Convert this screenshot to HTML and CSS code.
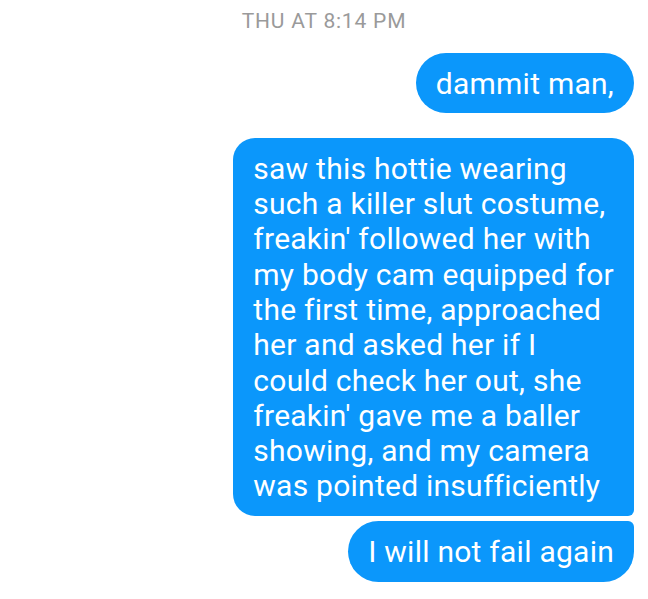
FILE: index.html
```html
<!DOCTYPE html>
<html>
<head>
<meta charset="utf-8">
<link rel="stylesheet" href="styles.css">
</head>
<body>
<div class="thread">
  <div class="timestamp">THU AT 8:14 PM</div>
  <div class="group">
    <div class="bubble single">dammit man,</div>
  </div>
  <div class="group">
    <div class="bubble first">saw this hottie wearing<br>such a killer slut costume,<br>freakin' followed her with<br>my body cam equipped for<br>the first time, approached<br>her and asked her if I<br>could check her out, she<br>freakin' gave me a baller<br>showing, and my camera<br>was pointed insufficiently</div>
    <div class="bubble last">I will not fail again</div>
  </div>
</div>
</body>
</html>
```
FILE: styles.css
```css
html, body {
  margin: 0;
  padding: 0;
  background: #ffffff;
}
.thread {
  width: 648px;
  height: 599px;
  display: flex;
  flex-direction: column;
  font-family: Roboto, "Noto Sans", sans-serif;
  padding: 7px 14px 0 14px;
  box-sizing: border-box;
}
.timestamp {
  text-align: center;
  color: #9a9a9a;
  font-size: 21px;
  line-height: 28px;
  letter-spacing: 0.8px;
}
.group {
  display: flex;
  flex-direction: column;
  align-items: flex-end;
  gap: 5px;
}
.group + .group {
  margin-top: 25px;
}
.timestamp + .group {
  margin-top: 18px;
}
.bubble {
  background: #0b97fb;
  color: #ffffff;
  font-size: 30px;
  line-height: 35.3px;
  letter-spacing: 0.25px;
  padding: 12.5px 20px 12.5px 20px;
  border-radius: 22px;
}
.bubble.single {
  border-radius: 31px;
}
.bubble.first {
  border-radius: 22px 22px 6px 22px;
}
.bubble.last {
  border-radius: 31px 6px 31px 31px;
}
```
